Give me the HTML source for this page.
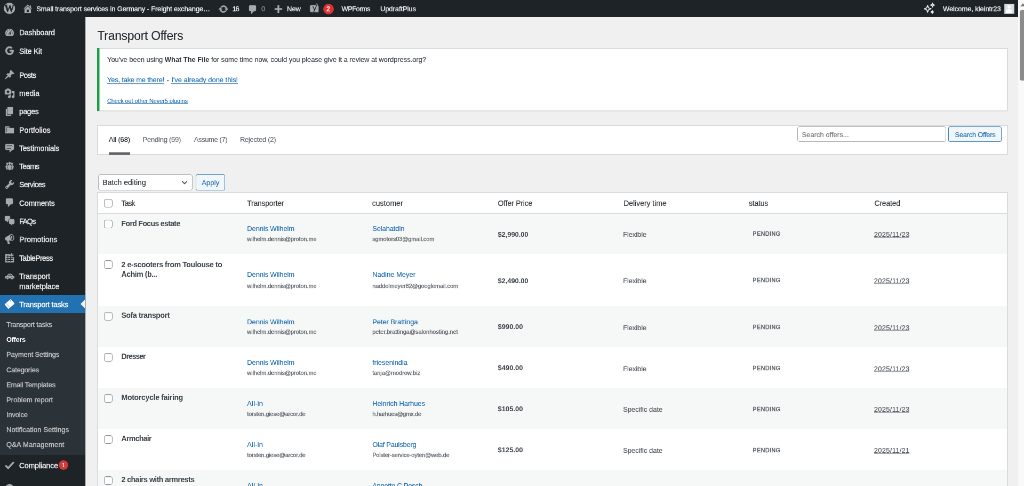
<!DOCTYPE html>
<html lang="en">
<head>
<meta charset="utf-8">
<title>Transport Offers</title>
<style>
*{box-sizing:border-box;margin:0;padding:0}
html,body{width:1024px;height:486px;overflow:hidden;background:#f0f0f1}
body{font-family:"Liberation Sans",sans-serif;color:#3c434a;-webkit-text-stroke:.2px}
#s{position:absolute;left:0;top:0;width:1920px;height:912px;transform:scale(.533333);transform-origin:0 0;will-change:transform;font-size:13px;line-height:1.4;overflow:hidden;background:#f0f0f1}
a{color:#2271b1;text-decoration:none}
.abs{position:absolute;white-space:nowrap}
#bar{position:absolute;left:0;top:0;width:1908.75px;height:31.875px;background:#1d2327;color:#f0f0f1;font-size:13px}
#bar .abs{color:#f0f0f1;-webkit-text-stroke:.35px}
.ml{-webkit-text-stroke:.35px}
#bar svg{position:absolute;fill:#a7aaad;width:20px;height:20px;stroke:#a7aaad;stroke-width:.3}
#sb{position:absolute;left:1908.75px;top:0;width:12px;height:912px;background:#f9f9f9;overflow:hidden}
#sb i{position:absolute;left:3.500px;top:18.5px;width:14px;height:132px;background:#8b8b8b;border-radius:4px}
#sb b{position:absolute;left:4.500px;top:5.500px;border:5px solid transparent;border-top:0;border-bottom:6px solid #7a7a7a}
#menu{position:absolute;left:0;top:0;width:159.375px;height:912px;background:#1d2327}
.mi{position:absolute;left:8px;width:20px;height:20px}
.mi svg{display:block;width:20px;height:20px;fill:#a7aaad;stroke:#a7aaad;stroke-width:.35}
.mi.w svg{fill:#fff;stroke:none}
.bdg{width:18px;height:18px;border-radius:9px;background:#d63638;color:#fff;font-size:11px;line-height:18px;text-align:center}
h1{position:absolute;left:182px;top:52px;font-size:23px;font-weight:400;color:#1d2327;line-height:29.9px;white-space:nowrap}
.u{text-decoration:none}
.cb{position:absolute;width:16px;height:16px;border:1px solid #8c8f94;border-radius:4px;background:#fff;box-shadow:inset 0 1px 2px rgba(0,0,0,.1)}
.inp{position:absolute;background:#fff;border:1px solid #a5a8ac;border-radius:4px}
.btn{position:absolute;background:#f1f6fa;border:1px solid #3a80b9;border-radius:3px}
.dt{border-bottom:1.5px dotted #9a9da1}
</style>
</head>
<body>
<div id="s">
<div id="menu">
<div class="mi" style="top:51.0px"><svg viewBox="0 0 20 20" ><path d="M3.76 16h12.48c1.1-1.37 1.76-3.11 1.76-5 0-4.42-3.58-8-8-8s-8 3.58-8 8c0 1.89.66 3.63 1.76 5zM10 4c.55 0 1 .45 1 1s-.45 1-1 1-1-.45-1-1 .45-1 1-1zM6 6c.55 0 1 .45 1 1s-.45 1-1 1-1-.45-1-1 .45-1 1-1zm8 0c.55 0 1 .45 1 1s-.45 1-1 1-1-.45-1-1 .45-1 1-1zm-5.370 5.550L12 7v6c0 1.100-.9 2-2 2s-2-.9-2-2c0-.57.24-1.080.63-1.450zM4 10c.55 0 1 .45 1 1s-.45 1-1 1-1-.45-1-1 .45-1 1-1zm12 0c.55 0 1 .45 1 1s-.45 1-1 1-1-.45-1-1 .45-1 1-1zm-5 3c0-.55-.45-1-1-1s-1 .45-1 1 .45 1 1 1 1-.45 1-1z"/></svg></div>
<div class="mi" style="top:85.2px"><svg viewBox="0 0 20 20"><path d="M17.600 8.500H10v3h4.400c-.5 2-2.100 3.300-4.400 3.300-2.700 0-4.800-2.100-4.800-4.800S7.300 5.200 10 5.200c1.200 0 2.300.4 3.100 1.200l2.200-2.200C13.900 2.900 12.100 2.100 10 2.100c-4.400 0-7.900 3.500-7.900 7.900s3.500 7.900 7.900 7.900c4.500 0 7.700-3.200 7.700-7.700 0-.6 0-1.100-.1-1.700z"/></svg></div>
<div class="mi" style="top:130.4px"><svg viewBox="0 0 20 20" ><path d="M10.44 3.02l1.82-1.82 6.36 6.35-1.83 1.82c-1.05-.68-2.48-.57-3.41.36l-.75.75c-.92.93-1.04 2.35-.35 3.41l-1.83 1.820-2.410-2.410-2.800 2.790c-.42.42-3.38 2.71-3.8 2.29s1.86-3.39 2.28-3.81l2.79-2.79L4.1 9.36l1.83-1.82c1.05.69 2.48.57 3.4-.36l.75-.75c.93-.92 1.05-2.35.36-3.41z"/></svg></div>
<div class="mi" style="top:164.6px"><svg viewBox="0 0 20 20" ><path d="M13 11V4c0-.55-.45-1-1-1h-1.670L9 1H5L3.670 3H2c-.55 0-1 .45-1 1v7c0 .55.45 1 1 1h10c.55 0 1-.45 1-1zM7 4.500c1.380 0 2.500 1.120 2.500 2.500S8.380 9.500 7 9.500 4.500 8.380 4.500 7 5.620 4.500 7 4.500zM14 6h5v10.500c0 1.380-1.120 2.500-2.500 2.500S14 17.880 14 16.500s1.120-2.500 2.500-2.500c.17 0 .34.02.5.05V9h-3V6zm-4 8.050V13h2v3.500c0 1.380-1.120 2.500-2.500 2.500S7 17.880 7 16.500 8.120 14 9.500 14c.17 0 .34.02.5.05z"/></svg></div>
<div class="mi" style="top:198.8px"><svg viewBox="0 0 20 20" ><path d="M6 15V2h10v13H6zm-1 1h8v2H3V5h2v11z"/></svg></div>
<div class="mi" style="top:233.0px"><svg viewBox="0 0 20 20"><path d="M5 7h13v10H2V4h7l2 2H4v9h1V7z"/></svg></div>
<div class="mi" style="top:267.2px"><svg viewBox="0 0 20 20" ><path d="M4 3h12c.55 0 1.020.2 1.410.59S18 4.450 18 5v7c0 .55-.2 1.020-.59 1.410S16.550 14 16 14h-1l-5 5v-5H4c-.55 0-1.020-.2-1.410-.59S2 12.550 2 12V5c0-.55.2-1.020.59-1.410S3.450 3 4 3zm11 2H4v1h11V5zm1 3H4v1h12V8zm-3 3H4v1h9v-1z"/></svg></div>
<div class="mi" style="top:301.4px"><svg viewBox="0 0 20 20" ><path d="M8.030 4.460c-.29 1.280.55 3.460 1.970 3.460 1.410 0 2.250-2.180 1.960-3.460-.22-.98-1.080-1.630-1.960-1.630-.89 0-1.740.65-1.970 1.630zm-4.130.9c-.25 1.080.47 2.930 1.670 2.930s1.920-1.850 1.670-2.930c-.19-.83-.92-1.390-1.670-1.390s-1.480.56-1.670 1.390zm8.860 0c-.25 1.080.47 2.930 1.660 2.930 1.200 0 1.920-1.850 1.670-2.930-.19-.83-.92-1.390-1.670-1.390-.74 0-1.470.56-1.660 1.390zm-.59 11.430l1.250-4.300C14.200 10 12.710 8.470 10 8.470c-2.720 0-4.210 1.530-3.440 4.020l1.260 4.300C8.050 17.510 9 18 10 18c.98 0 1.940-.49 2.170-1.210zm-6.100-7.630c-.49.67-.96 1.830-.42 3.590l1.120 3.790c-.34.2-.77.31-1.200.31-.85 0-1.650-.41-1.850-1.030l-1.070-3.650c-.65-2.110.61-3.400 2.920-3.400.27 0 .54.02.79.06-.1.1-.2.22-.29.33zm8.350-.39c2.310 0 3.580 1.290 2.920 3.400l-1.070 3.650c-.2.62-1 1.030-1.850 1.030-.43 0-.86-.11-1.200-.31l1.110-3.770c.55-1.780.08-2.940-.42-3.610-.08-.11-.18-.23-.28-.33.25-.04.51-.06.79-.06z"/></svg></div>
<div class="mi" style="top:335.6px"><svg viewBox="0 0 20 20" ><path d="M16.680 9.770c-1.340 1.340-3.300 1.670-4.950.99l-5.410 6.520c-.99.99-2.590.99-3.580 0s-.99-2.590 0-3.570l6.520-5.420c-.68-1.650-.35-3.610.99-4.950 1.280-1.280 3.120-1.620 4.720-1.060l-2.890 2.890 2.820 2.820 2.860-2.870c.53 1.580.18 3.390-1.080 4.650zM3.810 16.210c.4.39 1.040.39 1.430 0 .4-.4.4-1.040 0-1.430-.39-.4-1.030-.4-1.430 0-.39.39-.39 1.030 0 1.430z"/></svg></div>
<div class="mi" style="top:369.8px"><svg viewBox="0 0 20 20" ><path d="M5 2h9c1.1 0 2 .9 2 2v7c0 1.1-.9 2-2 2h-2l-5 5v-5H5c-1.1 0-2-.9-2-2V4c0-1.1.9-2 2-2z"/></svg></div>
<div class="mi" style="top:404.0px"><svg viewBox="0 0 20 20" ><path d="M11 6h-.82C9.070 6 8 7.200 8 8.160V10l-3 3v-3H3c-1.100 0-2-.9-2-2V3c0-1.100.9-2 2-2h6c1.100 0 2 .9 2 2v3zm0 1h6c1.100 0 2 .9 2 2v5c0 1.100-.9 2-2 2h-2v3l-3-3h-1c-1.100 0-2-.9-2-2V9c0-1.100.9-2 2-2z"/></svg></div>
<div class="mi" style="top:438.2px"><svg viewBox="0 0 20 20" ><path d="M18.150 5.940c.46 1.620.38 3.220-.02 4.480-.42 1.280-1.260 2.180-2.300 2.480-.16.06-.26.06-.4.06-.06.02-.12.02-.18.02-.06.02-.14.02-.22.02h-6.800l2.220 5.500c.02.14-.06.26-.14.34-.08.1-.24.16-.34.16H6.950c-.1 0-.26-.06-.34-.16-.08-.08-.16-.2-.14-.34l-1-5.500H4.250l-.02-.02c-.5.06-1.080-.18-1.540-.62s-.88-1.080-1.060-1.880c-.24-.8-.2-1.560-.02-2.200.18-.62.58-1.080 1.060-1.300l.02-.02 9-5.400c.1-.06.18-.1.24-.16.06-.04.14-.08.24-.12.16-.08.28-.12.5-.18 1.040-.3 2.240.1 3.220.98s1.840 2.240 2.260 3.860zm-2.580 5.980h-.02c.4-.1.74-.34 1.040-.7.58-.7.86-1.760.86-3.040 0-.64-.1-1.300-.28-1.980-.34-1.360-1.020-2.500-1.780-3.240s-1.680-1.100-2.460-.88c-.82.22-1.400.96-1.700 2-.32 1.040-.28 2.360.06 3.720.38 1.360 1 2.500 1.800 3.240.78.74 1.620 1.100 2.480.88zm-2.540-7.080c.22-.04.42-.02.62.04.38.16.76.48 1.020 1s.42 1.200.42 1.780c0 .3-.04.56-.12.8-.18.48-.44.84-.86.94-.34.1-.8-.06-1.140-.4s-.64-.86-.78-1.500c-.18-.62-.12-1.240.02-1.720s.48-.84.82-.94z"/></svg></div>
<div class="mi" style="top:473.5px"><svg viewBox="0 0 20 20"><path d="M2 2.500h8.500v6H18V18H2z"/><path d="M12.800 1.200h2v2.400h2.400v2h-2.400V8h-2V5.600h-2.400v-2h2.400z"/><path d="M3.600 6.800h12.800M3.600 10.600h12.800M3.600 14.400h12.800M6.800 4v12.500M11.600 8v8.500" stroke="#1d2327" stroke-width="1.100" fill="none"/></svg></div>
<div class="mi" style="top:507.7px"><svg viewBox="0 0 20 20"><path d="M1.200 12.300c0-1.500.8-2.400 2.300-2.700l1.800-.4 1.600-2.700c.4-.7 1-1 1.800-1h3.600c.8 0 1.400.3 1.900 1l1.700 2.600 1.300.3c1.100.3 1.700 1 1.700 2.100v1.600c0 .5-.3.800-.8.800h-1.300a2.300 2.300 0 00-4.600 0H8.300a2.300 2.300 0 00-4.600 0H2c-.5 0-.8-.3-.8-.8zM7 9.200h3V6.800H8.900c-.4 0-.6.100-.8.500zm4.200 0h3.300l-1.300-2c-.2-.3-.4-.4-.8-.4h-1.200z"/><circle cx="6" cy="14" r="1.700"/><circle cx="14.500" cy="14" r="1.700"/></svg></div>
<div class="abs" style="left:0.000px;top:553.125px;width:159.375px;height:33.750px;background:#2271b1;"></div>
<svg class="abs" viewBox="0 0 8 16" style="left:151.4px;top:562.2px;width:8px;height:16px"><path d="M8 0v16L0 8z" fill="#f0f0f1"/></svg>
<div class="mi w" style="top:560.1px"><svg viewBox="0 0 20 20"><g transform="rotate(-40 10 10)"><path d="M3.200 4.300h13.600a1 1 0 011 1v9.400a1 1 0 01-1 1H3.200a1 1 0 01-1-1V5.300a1 1 0 011-1z"/><circle cx="15.200" cy="6.800" r="1" fill="#2271b1"/><path d="M6.200 5v10" stroke="#2271b1" stroke-width=".8" stroke-dasharray="1.300 1"/></g></svg></div>
<div class="abs" style="left:0.000px;top:586.875px;width:159.375px;height:266.250px;background:#2c3338;"></div>
<div class="mi" style="top:862.1px"><svg viewBox="0 0 20 20"><path d="M2.300 10.700l5 5L17.800 4.300" fill="none" stroke="#a7aaad" stroke-width="3.400"/></svg></div>
<div class="abs bdg" style="left:110px;top:863.1px">1</div>
<div class="mi" style="top:896.3px"><svg viewBox="0 0 20 20" style="margin-top:9.500px"><circle cx="10" cy="10" r="8.300"/></svg></div>
</div>
<div id="t9" class="abs ml" style="left:36.0px;font-size:14px;line-height:20px;color:#f0f0f1;letter-spacing:-0.187px;top:51px;">Dashboard</div>
<div id="t10" class="abs ml" style="left:36.0px;font-size:14px;line-height:20px;color:#f0f0f1;letter-spacing:-0.223px;top:86px;">Site Kit</div>
<div id="t11" class="abs ml" style="left:36.0px;font-size:14px;line-height:20px;color:#f0f0f1;letter-spacing:-0.754px;top:131px;">Posts</div>
<div id="t12" class="abs ml" style="left:36.0px;font-size:14px;line-height:20px;color:#f0f0f1;letter-spacing:-0.010px;top:165px;">media</div>
<div id="t13" class="abs ml" style="left:36.0px;font-size:14px;line-height:20px;color:#f0f0f1;letter-spacing:-0.364px;top:199px;">pages</div>
<div id="t14" class="abs ml" style="left:36.0px;font-size:14px;line-height:20px;color:#f0f0f1;letter-spacing:0.049px;top:234px;">Portfolios</div>
<div id="t15" class="abs ml" style="left:36.0px;font-size:14px;line-height:20px;color:#f0f0f1;letter-spacing:-0.157px;top:268px;">Testimonials</div>
<div id="t16" class="abs ml" style="left:36.0px;font-size:14px;line-height:20px;color:#f0f0f1;letter-spacing:-0.784px;top:302px;">Teams</div>
<div id="t17" class="abs ml" style="left:36.0px;font-size:14px;line-height:20px;color:#f0f0f1;letter-spacing:-0.613px;top:336px;">Services</div>
<div id="t18" class="abs ml" style="left:36.0px;font-size:14px;line-height:20px;color:#f0f0f1;letter-spacing:-0.127px;top:371px;">Comments</div>
<div id="t19" class="abs ml" style="left:36.0px;font-size:14px;line-height:20px;color:#f0f0f1;letter-spacing:-1.172px;top:405px;">FAQs</div>
<div id="t20" class="abs ml" style="left:36.0px;font-size:14px;line-height:20px;color:#f0f0f1;letter-spacing:0.076px;top:439px;">Promotions</div>
<div id="t21" class="abs ml" style="left:36.0px;font-size:14px;line-height:20px;color:#f0f0f1;letter-spacing:-0.641px;top:474px;">TablePress</div>
<div id="t22" class="abs ml" style="left:36.0px;font-size:14px;line-height:20px;color:#f0f0f1;letter-spacing:-0.186px;top:508px;">Transport</div>
<div id="t23" class="abs ml" style="left:36.0px;font-size:14px;line-height:20px;color:#f0f0f1;letter-spacing:-0.097px;top:527px;">marketplace</div>
<div id="t24" class="abs ml" style="left:36.0px;font-size:14px;line-height:20px;color:#fff;letter-spacing:-0.269px;top:561px;">Transport tasks</div>
<div id="t25" class="abs ml" style="left:12.0px;font-size:13px;line-height:20px;color:#c3c4c7;letter-spacing:-0.244px;top:599px;">Transport tasks</div>
<div id="t26" class="abs" style="left:12.0px;font-size:13px;line-height:20px;color:#fff;font-weight:700;-webkit-text-stroke:0;letter-spacing:-0.419px;top:627px;">Offers</div>
<div id="t27" class="abs ml" style="left:12.0px;font-size:13px;line-height:20px;color:#c3c4c7;letter-spacing:-0.173px;top:655px;">Payment Settings</div>
<div id="t28" class="abs ml" style="left:12.0px;font-size:13px;line-height:20px;color:#c3c4c7;letter-spacing:-0.186px;top:684px;">Categories</div>
<div id="t29" class="abs ml" style="left:12.0px;font-size:13px;line-height:20px;color:#c3c4c7;letter-spacing:-0.210px;top:712px;">Email Templates</div>
<div id="t30" class="abs ml" style="left:12.0px;font-size:13px;line-height:20px;color:#c3c4c7;letter-spacing:0.086px;top:740px;">Problem report</div>
<div id="t31" class="abs ml" style="left:12.0px;font-size:13px;line-height:20px;color:#c3c4c7;letter-spacing:-0.201px;top:768px;">Invoice</div>
<div id="t32" class="abs ml" style="left:12.0px;font-size:13px;line-height:20px;color:#c3c4c7;letter-spacing:0.115px;top:796px;">Notification Settings</div>
<div id="t33" class="abs ml" style="left:12.0px;font-size:13px;line-height:20px;color:#c3c4c7;letter-spacing:0.167px;top:824px;">Q&amp;A Management</div>
<div id="t34" class="abs ml" style="left:36.0px;font-size:14px;line-height:20px;color:#f0f0f1;letter-spacing:-0.104px;top:863px;">Compliance</div>
<div id="t35" class="abs" style="left:182.5px;font-size:23px;line-height:20px;color:#23282d;line-height:30px;-webkit-text-stroke:.1px;letter-spacing:-0.331px;top:52px;">Transport Offers</div>
<div class="abs" style="left:159.375px;top:31.875px;width:1.875px;height:879.375px;background:#a9abad;"></div>
<div class="abs" style="left:181.875px;top:90.000px;width:1708.125px;height:118.125px;background:#dbdbdc;"></div>
<div class="abs" style="left:183.750px;top:91.875px;width:1704.375px;height:114.375px;background:#fff;"></div>
<div class="abs" style="left:181.875px;top:206.250px;width:1708.125px;height:1.875px;background:#e6e6e7;"></div>
<div class="abs" style="left:181.875px;top:208.125px;width:1708.125px;height:1.875px;background:#e8e8e9;"></div>
<div class="abs" style="left:181.875px;top:90.000px;width:3.750px;height:118.125px;background:#1f9a47;"></div>
<div class="abs" style="left:185.625px;top:90.000px;width:1.875px;height:118.125px;background:#8fd3a4;"></div>
<div id="t36" class="abs" style="left:201.0px;font-size:13px;line-height:20px;letter-spacing:-0.066px;top:102px;">You've been using <b style="color:#2c3338;font-weight:700;-webkit-text-stroke:0">What The File</b> for some time now, could you please give it a review at wordpress.org?</div>
<div id="t37" class="abs u" style="left:201.0px;font-size:13px;line-height:20px;color:#2271b1;letter-spacing:-0.235px;top:140px;">Yes, take me there!</div>
<div id="t38" class="abs" style="left:312.5px;font-size:13px;line-height:20px;top:140px;">-</div>
<div id="t39" class="abs u" style="left:321.4px;font-size:13px;line-height:20px;color:#2271b1;letter-spacing:-0.057px;top:140px;">I've already done this!</div>
<div id="t40" class="abs u" style="left:201.0px;font-size:11px;line-height:20px;color:#2271b1;letter-spacing:-0.107px;top:179px;">Check out other Never5 plugins</div>
<div class="abs" style="left:201.000px;top:155.625px;width:107.250px;height:1.875px;background:#6a9fcb;"></div>
<div class="abs" style="left:321.375px;top:155.625px;width:124.875px;height:1.875px;background:#6a9fcb;"></div>
<div class="abs" style="left:201.000px;top:193.125px;width:151.125px;height:1.875px;background:#6a9fcb;"></div>
<div class="abs" style="left:181.875px;top:234.375px;width:1708.125px;height:56.250px;background:#dbdbdc;"></div>
<div class="abs" style="left:183.750px;top:236.250px;width:1704.375px;height:52.500px;background:#fff;"></div>
<div id="t41" class="abs" style="left:204.0px;font-size:13px;line-height:20px;color:#1d2327;letter-spacing:-0.155px;top:252px;">All (68)</div>
<div class="abs" style="left:204.375px;top:285.000px;width:39.375px;height:1.875px;background:#8d8f92;"></div>
<div class="abs" style="left:204.375px;top:286.875px;width:39.375px;height:1.875px;background:#606366;"></div>
<div class="abs" style="left:204.375px;top:288.750px;width:39.375px;height:1.875px;background:#6e7174;"></div>
<div id="t42" class="abs" style="left:267.6px;font-size:13px;line-height:20px;color:#646970;letter-spacing:-0.241px;top:252px;">Pending (59)</div>
<div id="t43" class="abs" style="left:363.8px;font-size:13px;line-height:20px;color:#646970;letter-spacing:-0.408px;top:252px;">Assume (7)</div>
<div id="t44" class="abs" style="left:450.0px;font-size:13px;line-height:20px;color:#646970;letter-spacing:-0.301px;top:252px;">Rejected (2)</div>
<div class="inp" style="left:1494.6px;top:236.8px;width:279.5px;height:29.5px"></div>
<div id="t45" class="abs" style="left:1503.5px;font-size:13px;line-height:20px;color:#757575;letter-spacing:0.005px;top:243px;">Search offers...</div>
<div class="btn" style="left:1778px;top:236.8px;width:100px;height:29.5px"></div>
<div id="t46" class="abs" style="left:1790.6px;font-size:13px;line-height:20px;color:#2271b1;letter-spacing:-0.314px;top:243px;">Search Offers</div>
<div class="inp" style="left:183.7px;top:327px;width:177px;height:29.5px"></div>
<div id="t47" class="abs" style="left:192.3px;font-size:14px;line-height:20px;color:#2c3338;letter-spacing:0.037px;top:332px;">Batch editing</div>
<svg class="abs" viewBox="0 0 20 20" style="left:335.500px;top:332px;width:20px;height:20px"><path d="M5.500 8l4.500 4.500L14.500 8" fill="none" stroke="#50575e" stroke-width="1.900"/></svg>
<div class="btn" style="left:367px;top:327px;width:54.5px;height:29.5px"></div>
<div id="t48" class="abs" style="left:378.2px;font-size:13px;line-height:20px;color:#2271b1;letter-spacing:0.117px;top:333px;">Apply</div>
<div class="abs" style="left:181.875px;top:360.000px;width:1708.125px;height:553.125px;background:#dbdbdc;"></div>
<div class="abs" style="left:183.750px;top:361.875px;width:1704.375px;height:551.250px;background:#fff;"></div>
<div class="abs" style="left:183.750px;top:399.375px;width:1704.375px;height:1.875px;background:#dbdbdc;"></div>
<div class="cb" style="left:194.600px;top:373px"></div>
<div id="t49" class="abs" style="left:227.6px;font-size:14px;line-height:20px;color:#32373c;letter-spacing:-0.966px;top:371px;">Task</div>
<div id="t50" class="abs" style="left:463.3px;font-size:14px;line-height:20px;color:#32373c;letter-spacing:-0.264px;top:371px;">Transporter</div>
<div id="t51" class="abs" style="left:697.7px;font-size:14px;line-height:20px;color:#32373c;letter-spacing:0.046px;top:371px;">customer</div>
<div id="t52" class="abs" style="left:933.5px;font-size:14px;line-height:20px;color:#32373c;letter-spacing:-0.176px;top:371px;">Offer Price</div>
<div id="t53" class="abs" style="left:1169.2px;font-size:14px;line-height:20px;color:#32373c;letter-spacing:-0.034px;top:371px;">Delivery time</div>
<div id="t54" class="abs" style="left:1404.0px;font-size:14px;line-height:20px;color:#32373c;letter-spacing:-0.232px;top:371px;">status</div>
<div id="t55" class="abs" style="left:1639.5px;font-size:14px;line-height:20px;color:#32373c;letter-spacing:-0.219px;top:371px;">Created</div>
<div class="abs" style="left:183.750px;top:401.250px;width:1704.375px;height:75.000px;background:#f6f7f7;"></div>
<div class="cb" style="left:194.600px;top:412px"></div>
<div id="t56" class="abs" style="left:227.6px;font-size:14px;line-height:20px;color:#3c434a;font-weight:700;-webkit-text-stroke:0;letter-spacing:-0.625px;top:409px;">Ford Focus estate</div>
<div id="t57" class="abs" style="left:463.3px;font-size:13px;line-height:20px;color:#2271b1;letter-spacing:-0.109px;top:419px;">Dennis Wilhelm</div>
<div id="t58" class="abs" style="left:463.3px;font-size:11px;line-height:20px;color:#5a6066;-webkit-text-stroke:.3px;letter-spacing:-0.106px;top:438px;">wilhelm.dennis@proton.me</div>
<div id="t59" class="abs" style="left:698.2px;font-size:13px;line-height:20px;color:#2271b1;letter-spacing:-0.139px;top:419px;">Selahatdin</div>
<div id="t60" class="abs" style="left:698.2px;font-size:11px;line-height:20px;color:#5a6066;-webkit-text-stroke:.3px;letter-spacing:-0.135px;top:438px;">sgmotors03@gmail.com</div>
<div id="t61" class="abs" style="left:933.5px;font-size:13px;line-height:20px;color:#3c434a;font-weight:700;-webkit-text-stroke:0;letter-spacing:-0.105px;top:430px;">$2,990.00</div>
<div id="t62" class="abs" style="left:1168.2px;font-size:13px;line-height:20px;color:#50575e;letter-spacing:-0.114px;top:430px;">Flexible</div>
<div id="t63" class="abs" style="left:1411.6px;font-size:10.5px;line-height:20px;color:#50575e;-webkit-text-stroke:.45px;letter-spacing:0.576px;top:428px;">PENDING</div>
<div id="t64" class="abs" style="left:1638.8px;font-size:13px;line-height:20px;color:#50575e;letter-spacing:0.266px;top:430px;">2025/11/23</div>
<div class="abs" style="left:1638.750px;top:444.375px;width:66.562px;height:1.875px;background:#a4a7ab;"></div>
<div class="cb" style="left:194.600px;top:488px"></div>
<div id="t65" class="abs" style="left:227.6px;font-size:14px;line-height:20px;color:#3c434a;font-weight:700;-webkit-text-stroke:0;letter-spacing:-0.374px;top:486px;">2 e-scooters from Toulouse to</div>
<div id="t66" class="abs" style="left:227.6px;font-size:14px;line-height:20px;color:#3c434a;font-weight:700;-webkit-text-stroke:0;letter-spacing:-0.426px;top:504px;">Achim (b...</div>
<div id="t67" class="abs" style="left:463.3px;font-size:13px;line-height:20px;color:#2271b1;letter-spacing:-0.109px;top:505px;">Dennis Wilhelm</div>
<div id="t68" class="abs" style="left:463.3px;font-size:11px;line-height:20px;color:#5a6066;-webkit-text-stroke:.3px;letter-spacing:-0.106px;top:526px;">wilhelm.dennis@proton.me</div>
<div id="t69" class="abs" style="left:698.2px;font-size:13px;line-height:20px;color:#2271b1;letter-spacing:-0.003px;top:505px;">Nadine Meyer</div>
<div id="t70" class="abs" style="left:698.2px;font-size:11px;line-height:20px;color:#5a6066;-webkit-text-stroke:.3px;letter-spacing:-0.117px;top:526px;">naddelmeyer82@googlemail.com</div>
<div id="t71" class="abs" style="left:933.5px;font-size:13px;line-height:20px;color:#3c434a;font-weight:700;-webkit-text-stroke:0;letter-spacing:-0.105px;top:517px;">$2,490.00</div>
<div id="t72" class="abs" style="left:1168.2px;font-size:13px;line-height:20px;color:#50575e;letter-spacing:-0.114px;top:517px;">Flexible</div>
<div id="t73" class="abs" style="left:1411.6px;font-size:10.5px;line-height:20px;color:#50575e;-webkit-text-stroke:.45px;letter-spacing:0.576px;top:515px;">PENDING</div>
<div id="t74" class="abs" style="left:1638.8px;font-size:13px;line-height:20px;color:#50575e;letter-spacing:0.266px;top:517px;">2025/11/23</div>
<div class="abs" style="left:1638.750px;top:530.625px;width:66.562px;height:1.875px;background:#a4a7ab;"></div>
<div class="abs" style="left:183.750px;top:573.750px;width:1704.375px;height:76.875px;background:#f6f7f7;"></div>
<div class="cb" style="left:194.600px;top:584.7px"></div>
<div id="t75" class="abs" style="left:227.6px;font-size:14px;line-height:20px;color:#3c434a;font-weight:700;-webkit-text-stroke:0;letter-spacing:-0.376px;top:581px;">Sofa transport</div>
<div id="t76" class="abs" style="left:463.3px;font-size:13px;line-height:20px;color:#2271b1;letter-spacing:-0.109px;top:594px;">Dennis Wilhelm</div>
<div id="t77" class="abs" style="left:463.3px;font-size:11px;line-height:20px;color:#5a6066;-webkit-text-stroke:.3px;letter-spacing:-0.106px;top:612px;">wilhelm.dennis@proton.me</div>
<div id="t78" class="abs" style="left:698.2px;font-size:13px;line-height:20px;color:#2271b1;letter-spacing:-0.101px;top:594px;">Peter Brattinga</div>
<div id="t79" class="abs" style="left:698.2px;font-size:11px;line-height:20px;color:#5a6066;-webkit-text-stroke:.3px;letter-spacing:-0.040px;top:612px;">peter.brattinga@salonhosting.net</div>
<div id="t80" class="abs" style="left:933.5px;font-size:13px;line-height:20px;color:#3c434a;font-weight:700;-webkit-text-stroke:0;letter-spacing:0.000px;top:603px;">$990.00</div>
<div id="t81" class="abs" style="left:1168.2px;font-size:13px;line-height:20px;color:#50575e;letter-spacing:-0.114px;top:605px;">Flexible</div>
<div id="t82" class="abs" style="left:1411.6px;font-size:10.5px;line-height:20px;color:#50575e;-webkit-text-stroke:.45px;letter-spacing:0.576px;top:603px;">PENDING</div>
<div id="t83" class="abs" style="left:1638.8px;font-size:13px;line-height:20px;color:#50575e;letter-spacing:0.266px;top:605px;">2025/11/23</div>
<div class="abs" style="left:1638.750px;top:618.750px;width:66.562px;height:1.875px;background:#a4a7ab;"></div>
<div class="cb" style="left:194.600px;top:661.7px"></div>
<div id="t84" class="abs" style="left:227.6px;font-size:14px;line-height:20px;color:#3c434a;font-weight:700;-webkit-text-stroke:0;letter-spacing:-1.043px;top:658px;">Dresser</div>
<div id="t85" class="abs" style="left:463.3px;font-size:13px;line-height:20px;color:#2271b1;letter-spacing:-0.109px;top:670px;">Dennis Wilhelm</div>
<div id="t86" class="abs" style="left:463.3px;font-size:11px;line-height:20px;color:#5a6066;-webkit-text-stroke:.3px;letter-spacing:-0.106px;top:689px;">wilhelm.dennis@proton.me</div>
<div id="t87" class="abs" style="left:698.2px;font-size:13px;line-height:20px;color:#2271b1;letter-spacing:-0.055px;top:670px;">friesenindia</div>
<div id="t88" class="abs" style="left:698.2px;font-size:11px;line-height:20px;color:#5a6066;-webkit-text-stroke:.3px;letter-spacing:-0.050px;top:689px;">tanja@modrow.biz</div>
<div id="t89" class="abs" style="left:933.5px;font-size:13px;line-height:20px;color:#3c434a;font-weight:700;-webkit-text-stroke:0;letter-spacing:0.000px;top:680px;">$490.00</div>
<div id="t90" class="abs" style="left:1168.2px;font-size:13px;line-height:20px;color:#50575e;letter-spacing:-0.114px;top:682px;">Flexible</div>
<div id="t91" class="abs" style="left:1411.6px;font-size:10.5px;line-height:20px;color:#50575e;-webkit-text-stroke:.45px;letter-spacing:0.576px;top:680px;">PENDING</div>
<div id="t92" class="abs" style="left:1638.8px;font-size:13px;line-height:20px;color:#50575e;letter-spacing:0.266px;top:682px;">2025/11/23</div>
<div class="abs" style="left:1638.750px;top:695.625px;width:66.562px;height:1.875px;background:#a4a7ab;"></div>
<div class="abs" style="left:183.750px;top:727.500px;width:1704.375px;height:76.875px;background:#f6f7f7;"></div>
<div class="cb" style="left:194.600px;top:738.7px"></div>
<div id="t93" class="abs" style="left:227.6px;font-size:14px;line-height:20px;color:#3c434a;font-weight:700;-webkit-text-stroke:0;letter-spacing:-0.282px;top:735px;">Motorcycle fairing</div>
<div id="t94" class="abs" style="left:463.3px;font-size:13px;line-height:20px;color:#2271b1;letter-spacing:0.139px;top:747px;">All-in</div>
<div id="t95" class="abs" style="left:463.3px;font-size:11px;line-height:20px;color:#5a6066;-webkit-text-stroke:.3px;letter-spacing:-0.200px;top:766px;">torsten.giese@arcor.de</div>
<div id="t96" class="abs" style="left:698.2px;font-size:13px;line-height:20px;color:#2271b1;letter-spacing:-0.109px;top:747px;">Heinrich Harhues</div>
<div id="t97" class="abs" style="left:698.2px;font-size:11px;line-height:20px;color:#5a6066;-webkit-text-stroke:.3px;letter-spacing:-0.291px;top:766px;">h.harhues@gmx.de</div>
<div id="t98" class="abs" style="left:933.5px;font-size:13px;line-height:20px;color:#3c434a;font-weight:700;-webkit-text-stroke:0;letter-spacing:0.000px;top:757px;">$105.00</div>
<div id="t99" class="abs" style="left:1168.2px;font-size:13px;line-height:20px;color:#50575e;letter-spacing:-0.036px;top:758px;">Specific date</div>
<div id="t100" class="abs" style="left:1411.6px;font-size:10.5px;line-height:20px;color:#50575e;-webkit-text-stroke:.45px;letter-spacing:0.576px;top:757px;">PENDING</div>
<div id="t101" class="abs" style="left:1638.8px;font-size:13px;line-height:20px;color:#50575e;letter-spacing:0.266px;top:758px;">2025/11/23</div>
<div class="abs" style="left:1638.750px;top:772.500px;width:66.562px;height:1.875px;background:#a4a7ab;"></div>
<div class="cb" style="left:194.600px;top:815.7px"></div>
<div id="t102" class="abs" style="left:227.6px;font-size:14px;line-height:20px;color:#3c434a;font-weight:700;-webkit-text-stroke:0;letter-spacing:-0.653px;top:812px;">Armchair</div>
<div id="t103" class="abs" style="left:463.3px;font-size:13px;line-height:20px;color:#2271b1;letter-spacing:0.139px;top:824px;">All-in</div>
<div id="t104" class="abs" style="left:463.3px;font-size:11px;line-height:20px;color:#5a6066;-webkit-text-stroke:.3px;letter-spacing:-0.200px;top:843px;">torsten.giese@arcor.de</div>
<div id="t105" class="abs" style="left:698.2px;font-size:13px;line-height:20px;color:#2271b1;letter-spacing:-0.269px;top:824px;">Olaf Paulsberg</div>
<div id="t106" class="abs" style="left:698.2px;font-size:11px;line-height:20px;color:#5a6066;-webkit-text-stroke:.3px;letter-spacing:-0.206px;top:843px;">Polster-service-oyten@web.de</div>
<div id="t107" class="abs" style="left:933.5px;font-size:13px;line-height:20px;color:#3c434a;font-weight:700;-webkit-text-stroke:0;letter-spacing:0.000px;top:834px;">$125.00</div>
<div id="t108" class="abs" style="left:1168.2px;font-size:13px;line-height:20px;color:#50575e;letter-spacing:-0.036px;top:835px;">Specific date</div>
<div id="t109" class="abs" style="left:1411.6px;font-size:10.5px;line-height:20px;color:#50575e;-webkit-text-stroke:.45px;letter-spacing:0.576px;top:834px;">PENDING</div>
<div id="t110" class="abs" style="left:1638.8px;font-size:13px;line-height:20px;color:#50575e;letter-spacing:0.266px;top:835px;">2025/11/21</div>
<div class="abs" style="left:1638.750px;top:849.375px;width:66.562px;height:1.875px;background:#a4a7ab;"></div>
<div class="abs" style="left:183.750px;top:881.250px;width:1704.375px;height:31.875px;background:#f6f7f7;"></div>
<div class="cb" style="left:194.600px;top:892.7px"></div>
<div id="t111" class="abs" style="left:227.6px;font-size:14px;line-height:20px;color:#3c434a;font-weight:700;-webkit-text-stroke:0;letter-spacing:-0.498px;top:889px;">2 chairs with armrests</div>
<div id="t112" class="abs" style="left:463.3px;font-size:13px;line-height:20px;color:#2271b1;letter-spacing:0.139px;top:901px;">All-in</div>
<div id="t113" class="abs" style="left:463.3px;font-size:11px;line-height:20px;color:#5a6066;-webkit-text-stroke:.3px;letter-spacing:-0.200px;top:920px;">torsten.giese@arcor.de</div>
<div id="t114" class="abs" style="left:698.2px;font-size:13px;line-height:20px;color:#2271b1;letter-spacing:-0.269px;top:901px;">Annette C Posch</div>
<div id="t115" class="abs" style="left:698.2px;font-size:11px;line-height:20px;color:#5a6066;-webkit-text-stroke:.3px;letter-spacing:-0.566px;top:920px;">annette.posch@web.de</div>
<div id="t116" class="abs" style="left:933.5px;font-size:13px;line-height:20px;color:#3c434a;font-weight:700;-webkit-text-stroke:0;letter-spacing:0.047px;top:910px;">$95.00</div>
<div id="t117" class="abs" style="left:1168.2px;font-size:13px;line-height:20px;color:#50575e;letter-spacing:-0.036px;top:912px;">Specific date</div>
<div id="t118" class="abs" style="left:1411.6px;font-size:10.5px;line-height:20px;color:#50575e;-webkit-text-stroke:.45px;letter-spacing:0.576px;top:910px;">PENDING</div>
<div id="t119" class="abs" style="left:1638.8px;font-size:13px;line-height:20px;color:#50575e;letter-spacing:0.266px;top:912px;">2025/11/21</div>
<div class="abs" style="left:1638.750px;top:926.250px;width:66.562px;height:1.875px;background:#a4a7ab;"></div>
<div id="bar">
<svg viewBox="0 0 20 20" style="left:6.600px;top:5.300px;width:21.400px;height:21.400px"><circle cx="10" cy="10" r="9.800"/><text x="10" y="16.200" text-anchor="middle" font-family="Liberation Serif,serif" font-weight="700" font-size="17.500" fill="#1d2327" stroke="#1d2327" stroke-width=".5">W</text></svg>
<svg viewBox="0 0 20 20" style="left:42px;top:6px"><path d="M16 8.5l1.53 1.53-1.06 1.06L10 4.62l-6.47 6.47-1.06-1.06L10 2.5l4 4v-2h2v4zm-6-2.46l6 5.99V18H4v-5.97zM12 17v-5H8v5h4z"/></svg>
<div id="t1" class="abs" style="left:68.2px;font-size:13px;line-height:20px;letter-spacing:-0.160px;top:7px;">Small transport services in Germany - Freight exchange&hellip;</div>
<svg viewBox="0 0 20 20" style="left:409px;top:6.5px"><path d="M10.2 3.28c3.53 0 6.43 2.61 6.92 6h2.08l-3.5 4-3.5-4h2.32c-.45-1.97-2.21-3.45-4.32-3.45-1.45 0-2.73.71-3.54 1.78L4.95 5.66C6.23 4.2 8.11 3.28 10.2 3.28zm-.4 13.44c-3.52 0-6.43-2.61-6.92-6H.8l3.5-4c1.17 1.33 2.33 2.67 3.5 4H5.48c.45 1.97 2.21 3.45 4.32 3.45 1.45 0 2.73-.71 3.54-1.78l1.71 1.95c-1.28 1.46-3.15 2.38-5.25 2.38z"/></svg>
<div id="t2" class="abs" style="left:435.7px;font-size:13px;line-height:20px;letter-spacing:-1.469px;top:7px;">16</div>
<svg viewBox="0 0 20 20" style="left:464px;top:7.5px"><path d="M5 2h9c1.1 0 2 .9 2 2v7c0 1.1-.9 2-2 2h-2l-5 5v-5H5c-1.1 0-2-.9-2-2V4c0-1.1.9-2 2-2z"/></svg>
<div id="t3" class="abs" style="left:489.9px;font-size:13px;line-height:20px;opacity:.5;top:7px;">0</div>
<svg viewBox="0 0 20 20" style="left:512.3px;top:6.5px"><path d="M17 8.5v3h-5.5V17h-3v-5.500H3v-3h5.500V3h3v5.500H17z"/></svg>
<div id="t4" class="abs" style="left:538.1px;font-size:13px;line-height:20px;letter-spacing:-0.058px;top:7px;">New</div>
<svg viewBox="0 0 20 20" style="left:579.5px;top:5.800px"><path d="M4.2 3.6h7.6l1.7-3 2.2.8-1 2.300c1.5.2 2.500 1.300 2.500 2.900V17H4.200c-1.700 0-3-1.300-3-3V6.600c0-1.700 1.300-3 3-3z"/><path fill="#1d2327" d="M13.700 1.300l1.500.55-4.500 11.800c-.6 1.500-1.500 2.600-3.300 2.700v-1.700c.9-.15 1.350-.7 1.650-1.500L5.700 5.600h1.900l2.300 5.500z"/></svg>
<div class="abs" style="left:605.5px;top:6.5px;width:20px;height:20px;border-radius:10px;background:#dc3232"></div>
<div id="t5" class="abs" style="left:611.9px;font-size:12px;line-height:20px;color:#fff;top:7px;">2</div>
<div id="t6" class="abs" style="left:640.5px;font-size:13px;line-height:20px;letter-spacing:-0.614px;top:7px;">WPForms</div>
<div id="t7" class="abs" style="left:712.9px;font-size:13px;line-height:20px;letter-spacing:-0.082px;top:7px;">UpdraftPlus</div>
<svg viewBox="0 0 24 24" style="left:1728.500px;top:2.500px;width:26px;height:26px;fill:none;stroke:#f0f0f1;stroke-width:1.6;stroke-linejoin:round"><path d="M9.5 6.500l1.600 4.400 4.400 1.600-4.400 1.600-1.600 4.400-1.600-4.400-4.400-1.600 4.400-1.600z"/><path d="M18 2.500l.9 2.600 2.600.9-2.600.9-.9 2.600-.9-2.600-2.600-.9 2.600-.9z"/><path d="M17.500 15.500l.7 1.800 1.800.7-1.800.7-.7 1.800-.7-1.800-1.800-.7 1.800-.7z"/></svg>
<div id="t8" class="abs" style="left:1768.0px;font-size:13px;line-height:20px;letter-spacing:-0.095px;top:7px;">Welcome, kleintr23</div>
<div class="abs" style="left:1882.500px;top:6.500px;width:19px;height:19px;background:#dcdcde;border:1px solid #b5b7ba;overflow:hidden"><div style="position:absolute;left:5.500px;top:2.500px;width:6px;height:6px;border-radius:3px;background:#fff"></div><div style="position:absolute;left:2.500px;top:9.500px;width:12px;height:9px;border-radius:5px 5px 0 0;background:#fff"></div></div>
</div>
<div id="sb"><b></b><i></i></div>
</div>
</body>
</html>
